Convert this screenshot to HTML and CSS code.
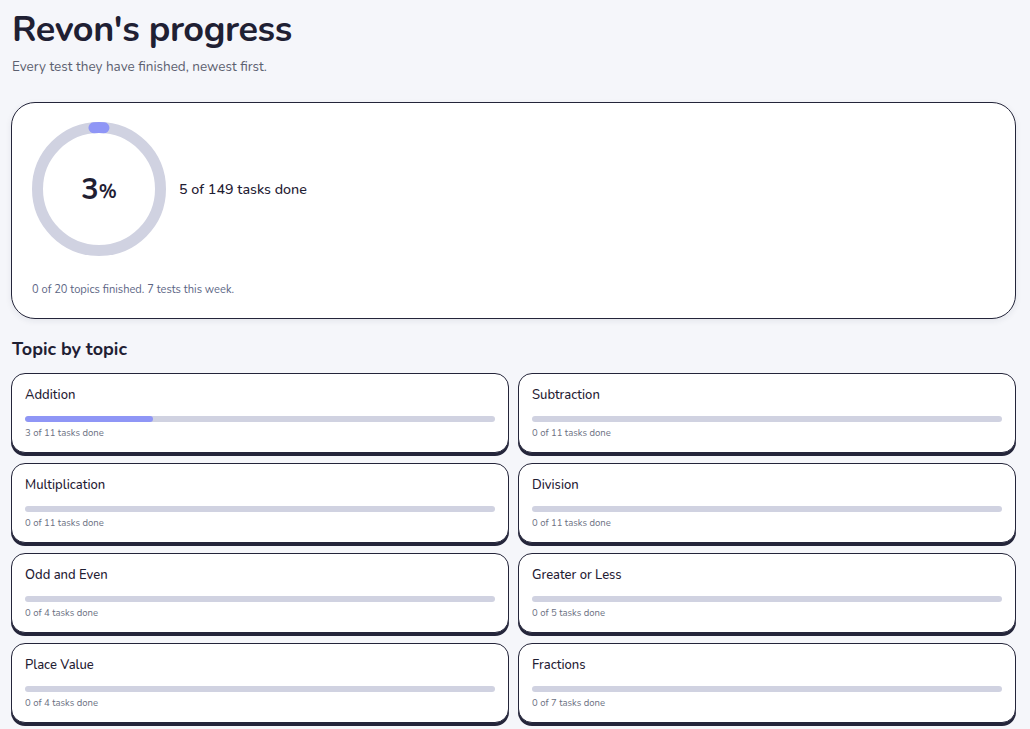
FILE: index.html
```html
<!DOCTYPE html>
<html lang="en">
<head>
<meta charset="utf-8">
<title>Revon's progress</title>
<link rel="stylesheet" href="styles.css">
</head>
<body>
<main class="page">
  <header class="head">
    <h1 class="title">Revon's progress</h1>
    <p class="subtitle">Every test they have finished, newest first.</p>
  </header>

  <section class="summary">
    <div class="summary-top">
      <div class="ring">
        <svg viewBox="0 0 134 134" width="134" height="134">
          <circle class="ring-track" cx="67" cy="67" r="61.5"></circle>
          <circle class="ring-fill" cx="67" cy="67" r="61.5" stroke-dasharray="10 400" transform="rotate(-94.7 67 67)"></circle>
        </svg>
        <div class="ring-label"><span class="ring-num">3</span><span class="ring-pct">%</span></div>
      </div>
      <div class="summary-count">5 of 149 tasks done</div>
    </div>
    <p class="summary-note">0 of 20 topics finished. 7 tests this week.</p>
  </section>

  <h2 class="section-title">Topic by topic</h2>

  <div class="topics">
    <div class="topic">
      <div class="topic-name">Addition</div>
      <div class="bar"><div class="bar-fill" style="width: 27.27%"></div></div>
      <div class="topic-meta">3 of 11 tasks done</div>
    </div>
    <div class="topic">
      <div class="topic-name">Subtraction</div>
      <div class="bar"></div>
      <div class="topic-meta">0 of 11 tasks done</div>
    </div>
    <div class="topic">
      <div class="topic-name">Multiplication</div>
      <div class="bar"></div>
      <div class="topic-meta">0 of 11 tasks done</div>
    </div>
    <div class="topic">
      <div class="topic-name">Division</div>
      <div class="bar"></div>
      <div class="topic-meta">0 of 11 tasks done</div>
    </div>
    <div class="topic">
      <div class="topic-name">Odd and Even</div>
      <div class="bar"></div>
      <div class="topic-meta">0 of 4 tasks done</div>
    </div>
    <div class="topic">
      <div class="topic-name">Greater or Less</div>
      <div class="bar"></div>
      <div class="topic-meta">0 of 5 tasks done</div>
    </div>
    <div class="topic">
      <div class="topic-name">Place Value</div>
      <div class="bar"></div>
      <div class="topic-meta">0 of 4 tasks done</div>
    </div>
    <div class="topic">
      <div class="topic-name">Fractions</div>
      <div class="bar"></div>
      <div class="topic-meta">0 of 7 tasks done</div>
    </div>
  </div>
</main>
</body>
</html>
```

FILE: styles.css
```css
* { box-sizing: border-box; }

html, body {
  margin: 0;
  padding: 0;
  background: #f5f6fa;
}

body {
  font-family: "Nunito", "Noto Sans", "Open Sans", sans-serif;
  color: #1f2033;
}

.page {
  padding: 6px 14px 40px 11px;
}

.head {
  padding-left: 1px;
}

.title {
  margin: 0;
  font-size: 36px;
  line-height: 48px;
  font-weight: 700;
  letter-spacing: -0.4px;
  color: #1f2033;
}

.subtitle {
  margin: 3px 0 0;
  font-size: 13.5px;
  line-height: 20px;
  color: #5c606f;
}

.summary {
  margin-top: 25px;
  background: #ffffff;
  border: 1px solid #24253a;
  border-radius: 24px;
  padding: 19px 20px 20px;
  box-shadow: 0 2px 6px rgba(30, 32, 60, 0.08);
}

.summary-top {
  display: flex;
  align-items: center;
  gap: 13px;
}

.ring {
  position: relative;
  width: 134px;
  height: 134px;
  flex: none;
}

.ring svg { display: block; }

.ring-track {
  fill: none;
  stroke: #d0d2e1;
  stroke-width: 11;
}

.ring-fill {
  fill: none;
  stroke: #8f96f6;
  stroke-width: 11;
  stroke-linecap: round;
}

.ring-label {
  position: absolute;
  inset: 0;
  display: flex;
  align-items: center;
  justify-content: center;
  padding-top: 1px;
}

.ring-num {
  font-size: 29px;
  font-weight: 700;
  line-height: 1;
}

.ring-pct {
  font-size: 19px;
  font-weight: 700;
  line-height: 1;
  margin-top: 6px;
}

.summary-count {
  font-size: 14.3px;
  font-weight: 500;
  color: #1f2033;
}

.summary-note {
  margin: 26px 0 0;
  font-size: 11.1px;
  line-height: 16px;
  color: #5c6584;
}

.section-title {
  margin: 18px 0 0 1px;
  font-size: 18px;
  line-height: 24px;
  font-weight: 700;
  color: #1f2033;
}

.topics {
  margin-top: 12px;
  display: grid;
  grid-template-columns: 1fr 1fr;
  gap: 10px 9px;
}

.topic {
  background: #ffffff;
  border: 1px solid #24253a;
  border-radius: 14px;
  box-shadow: 0 3px 0 #24253a;
  padding: 11px 13px 12px;
}

.topic-name {
  font-size: 13px;
  line-height: 20px;
  font-weight: 500;
  color: #1f2033;
}

.bar {
  margin-top: 11px;
  height: 6px;
  border-radius: 3px;
  background: #d0d2e1;
  overflow: hidden;
}

.bar-fill {
  height: 100%;
  border-radius: 3px;
  background: #8f96f6;
}

.topic-meta {
  margin-top: 4px;
  font-size: 9.5px;
  line-height: 14px;
  color: #6b7082;
}
```
